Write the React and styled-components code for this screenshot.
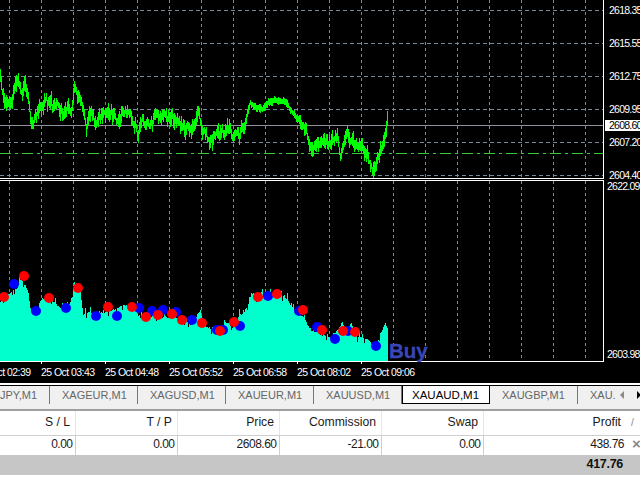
import React from 'react'
import styled, { createGlobalStyle } from 'styled-components'

const GlobalStyle = createGlobalStyle`
  html, body { margin: 0; padding: 0; background: #fff; }
  body { font-family: "Liberation Sans", Arial, sans-serif; }
`

const priceKeys = [[0,80],[2,92],[5,105],[8,108],[12,103],[15,88],[18,78],[20,84],[24,80],[27,95],[29,108],[31,130],[33,125],[37,118],[41,108],[44,100],[47,100],[50,108],[54,112],[58,105],[62,118],[66,108],[70,112],[72,105],[74,78],[76,92],[80,98],[83,110],[86,122],[92,118],[97,125],[103,118],[108,115],[115,120],[122,115],[128,113],[135,118],[137,130],[142,122],[148,118],[152,118],[158,116],[165,120],[172,115],[177,118],[180,122],[185,128],[190,130],[193,135],[197,125],[199,117],[202,135],[207,140],[213,140],[220,142],[228,135],[235,140],[239,135],[241,120],[245,115],[250,100],[254,105],[258,108],[262,112],[268,103],[274,100],[280,103],[285,102],[292,112],[297,120],[302,120],[306,135],[310,142],[318,140],[323,150],[330,142],[337,135],[340,148],[347,133],[352,140],[357,145],[365,155],[372,162],[375,170],[378,155],[382,143],[385,135],[387,123]]

const areaKeys = [[0,302],[10,293],[17,288],[20,280],[25,285],[28,293],[31,315],[37,307],[42,298],[47,299],[53,302],[63,310],[70,303],[74,283],[80,292],[83,315],[88,312],[100,313],[107,312],[117,308],[123,305],[137,310],[140,317],[157,317],[173,317],[183,320],[190,325],[200,310],[203,325],[213,330],[220,332],[225,322],[233,328],[242,310],[247,307],[252,290],[255,298],[263,295],[277,292],[287,300],[293,308],[303,317],[310,330],[323,335],[330,337],[337,330],[342,322],[345,332],[351,323],[357,338],[363,338],[370,342],[375,350],[380,333],[385,323],[387,328]]

const blueDots = [[14,284],[36,311],[66,308],[96,316],[117,316],[139,308],[152,311],[163,310],[176,312],[192,320],[217,330],[223,330],[240,326],[268,296],[299,311],[317,327],[335,339],[348,331],[376,346]]
const redDots = [[4,297],[24,276],[49,298],[78,288],[108,307],[132,307],[146,317],[158,315],[172,314],[182,320],[202,323],[220,331],[234,322],[258,297],[277,294],[303,310],[322,330],[343,331],[355,332]]

const gridX = Array.from({ length: 19 }, (_, i) => 9 + i * 32)
const gridY = [10, 43, 76, 109, 142, 175]

// small seeded generator, the noise has to come out the same on every render
function makeRandom(seed) {
  let s = seed
  return () => {
    s = (s * 16807) % 2147483647
    return (s - 1) / 2147483646
  }
}

function valueAt(keys, x) {
  for (let i = 1; i < keys.length; i++) {
    if (x <= keys[i][0]) {
      const [x0, y0] = keys[i - 1]
      const [x1, y1] = keys[i]
      return y0 + ((y1 - y0) * (x - x0)) / (x1 - x0)
    }
  }
  return keys[keys.length - 1][1]
}

function pricePath() {
  const rnd = makeRandom(4711)
  let d = ''
  let drift = 0
  for (let x = 0; x <= 387; x++) {
    const calm = x > 245 && x < 300
    drift = drift * 0.8 + (rnd() - 0.5) * (calm ? 2 : 10)
    const y = valueAt(priceKeys, x) + drift
    const reach = calm ? 2.5 : 7
    const top = y - 2 - rnd() * reach
    const low = y + 2 + rnd() * reach
    d += `${d ? 'L' : 'M'}${x + 0.5} ${top.toFixed(0)}L${x + 0.5} ${low.toFixed(0)}`
  }
  return d
}

function areaPath() {
  const rnd = makeRandom(1234)
  let d = 'M0 361'
  for (let x = 0; x <= 387; x++) {
    const spike = rnd() > 0.85 ? 2 + rnd() * 5 : 0
    const dip = rnd() > 0.9 ? 4 : 0
    const y = valueAt(areaKeys, x) + 1 - rnd() * 2 - spike + dip
    d += `L${x} ${y.toFixed(0)}L${x + 1} ${y.toFixed(0)}`
  }
  return d + 'L388 361Z'
}

const tabs = ['JPY,M1', 'XAGEUR,M1', 'XAGUSD,M1', 'XAUEUR,M1', 'XAUUSD,M1', 'XAUAUD,M1', 'XAUGBP,M1', 'XAU.']
const times = ['25 Oct 02:39', '25 Oct 03:43', '25 Oct 04:48', '25 Oct 05:52', '25 Oct 06:58', '25 Oct 08:02', '25 Oct 09:06']

function VerticalGrid({ y1, y2 }) {
  return gridX.map((x) => (
    <line key={x} x1={x + 0.5} x2={x + 0.5} y1={y1} y2={y2} stroke="#778899" strokeDasharray="3 3" />
  ))
}

export default function App() {
  return (
    <Page>
      <GlobalStyle />
      <ChartStack>
        <TopPane>
          <Plot>
            <ChartSvg width="603" height="178" viewBox="0 0 603 178">
              <VerticalGrid y1={0} y2={178} />
              {gridY.map((y) => (
                <line key={y} x1="0" x2="603" y1={y + 0.5} y2={y + 0.5} stroke="#778899" strokeDasharray="4 3" />
              ))}
              <line x1="0" x2="603" y1="153.5" y2="153.5" stroke="#32cd32" strokeDasharray="11 4 3 4" />
              <line x1="0" x2="603" y1="125.5" y2="125.5" stroke="#8c919b" />
              <path d={pricePath()} fill="none" stroke="#00ff00" strokeWidth="1.2" strokeLinejoin="bevel" shapeRendering="crispEdges" />
            </ChartSvg>
          </Plot>
          <PriceAxis>
            <PriceScale>
              <PriceLabel>2618.35</PriceLabel>
              <PriceLabel>2615.55</PriceLabel>
              <PriceLabel>2612.75</PriceLabel>
              <PriceLabel>2609.95</PriceLabel>
              <PriceLabel>2607.20</PriceLabel>
              <PriceLabel>2604.40</PriceLabel>
            </PriceScale>
            <PriceTag>2608.60</PriceTag>
          </PriceAxis>
        </TopPane>
        <BottomPane>
          <Plot>
            <ChartSvg width="603" height="180" viewBox="0 181 603 180">
              <VerticalGrid y1={181} y2={361} />
              <path d={areaPath()} fill="#00ffcc" />
              {blueDots.map(([x, y]) => (
                <circle key={x} cx={x} cy={y} r="5" fill="#0000ff" />
              ))}
              {redDots.map(([x, y]) => (
                <circle key={x} cx={x} cy={y} r="5" fill="#ff0000" />
              ))}
            </ChartSvg>
            <SignalLabel>Buy</SignalLabel>
          </Plot>
          <IndicatorScale>
            <span>2622.09</span>
            <span>2603.98</span>
          </IndicatorScale>
        </BottomPane>
        <TimeAxis>
          {times.map((t) => (
            <TimeLabel key={t}>{t}</TimeLabel>
          ))}
        </TimeAxis>
      </ChartStack>
      <TabBar>
        <TabRow>
          {tabs.map((t) => (
            <Tab key={t} $active={t === 'XAUAUD,M1'} $first={t === 'JPY,M1'}>
              {t}
            </Tab>
          ))}
        </TabRow>
        <TabArrows>
          <svg width="22" height="10" viewBox="0 0 22 10">
            <path d="M2 5l4-4v8z" fill="#8a8a8a" />
            <path d="M19 1l4 4-4 4z" fill="#000" />
          </svg>
        </TabArrows>
      </TabBar>
      <Table>
        <HeaderRow>
          <HeaderCell>S / L</HeaderCell>
          <HeaderCell>T / P</HeaderCell>
          <HeaderCell>Price</HeaderCell>
          <HeaderCell>Commission</HeaderCell>
          <HeaderCell>Swap</HeaderCell>
          <ProfitHeader>Profit</ProfitHeader>
          <RowMark>/</RowMark>
        </HeaderRow>
        <DataRow>
          <DataCell>0.00</DataCell>
          <DataCell>0.00</DataCell>
          <DataCell>2608.60</DataCell>
          <DataCell>-21.00</DataCell>
          <DataCell>0.00</DataCell>
          <ProfitCell>438.76</ProfitCell>
          <CloseMark>×</CloseMark>
        </DataRow>
        <TotalRow>417.76</TotalRow>
      </Table>
    </Page>
  )
}

const Page = styled.div`
  width: 640px;
  height: 480px;
  display: flex;
  flex-direction: column;
  overflow: hidden;
  background: #fff;
`

const ChartStack = styled.div`
  height: 383px;
  flex: none;
  display: flex;
  flex-direction: column;
  background: #000;
  color: #fff;
  overflow: hidden;
  font-size: 10.5px;
  letter-spacing: -0.75px;
`

const TopPane = styled.div`
  height: 179px;
  flex: none;
  display: flex;
  margin-bottom: 1px;
`

const BottomPane = styled.div`
  height: 181px;
  flex: none;
  display: flex;
`

const Plot = styled.div`
  position: relative;
  width: 603px;
  flex: none;
  border-right: 1px solid #fff;
  border-bottom: 1px solid #fff;

  ${BottomPane} & {
    border-top: 1px solid #fff;
    height: 180px;
  }
`

const ChartSvg = styled.svg`
  display: block;
`

const SignalLabel = styled.div`
  position: absolute;
  left: 389px;
  bottom: -2px;
  color: #3a46b8;
  font-size: 20.5px;
  font-weight: 700;
  letter-spacing: 0;
  line-height: 24px;
  -webkit-text-stroke: 0.3px #3a46b8;
`

const PriceAxis = styled.div`
  position: relative;
  flex: 1;
  min-width: 0;
`

const PriceScale = styled.div`
  display: flex;
  flex-direction: column;
  margin-top: -6px;
`

const PriceLabel = styled.div`
  height: 33px;
  line-height: 33px;
  padding-left: 5px;
  white-space: nowrap;
`

const PriceTag = styled.div`
  position: absolute;
  top: 120px;
  left: 1px;
  right: 0;
  height: 11px;
  line-height: 11px;
  padding-left: 4px;
  background: #fff;
  color: #000;
  white-space: nowrap;
`

const IndicatorScale = styled.div`
  flex: 1;
  min-width: 0;
  height: 180px;
  padding-left: 3px;
  display: flex;
  flex-direction: column;
  justify-content: space-between;
  white-space: nowrap;
  line-height: 12px;
`

const TimeAxis = styled.div`
  display: flex;
  margin-left: -23px;
  width: 663px;
`

const TimeLabel = styled.div`
  width: 64px;
  flex: none;
  padding-top: 5px;
  line-height: 12px;
  white-space: nowrap;
  letter-spacing: -0.55px;
  background: linear-gradient(#fff, #fff) left top / 1px 3px no-repeat;
`

const TabBar = styled.div`
  position: relative;
  height: 23px;
  flex: none;
  margin-top: 2px;
  border-top: 1px solid #000;
  background: #f0f0f0;
  overflow: hidden;
`

const TabRow = styled.div`
  display: flex;
  margin-left: -38px;
`

const Tab = styled.div`
  width: 88px;
  flex: none;
  box-sizing: border-box;
  height: 18px;
  line-height: 18px;
  padding-left: ${(p) => (p.$first ? '0' : p.$active ? '9px' : '12px')};
  text-align: ${(p) => (p.$first ? 'right' : 'left')};
  padding-right: ${(p) => (p.$first ? '12px' : '0')};
  font-size: ${(p) => (p.$active ? '11.5px' : '11px')};
  white-space: nowrap;
  color: ${(p) => (p.$active ? '#000' : '#666')};
  background: ${(p) => (p.$active ? '#fff' : 'transparent')};
  border-right: 1px solid ${(p) => (p.$active ? '#000' : '#777')};
  border-left: ${(p) => (p.$active ? '1px solid #000' : 'none')};
  border-bottom: ${(p) => (p.$active ? '1px solid #000' : 'none')};
`

const TabArrows = styled.div`
  position: absolute;
  top: 4px;
  right: 0;
  height: 10px;
  width: 22px;
  background: #f0f0f0;
  svg {
    display: block;
  }
`

const Table = styled.div`
  flex: none;
  border-top: 2px solid #a0a0a0;
  color: #1a1a1a;
`

const HeaderRow = styled.div`
  display: grid;
  grid-template-columns: 76px 102px 102px 102px 102px 140px 16px;
  height: 24px;
  border-bottom: 1px solid #cfcfcf;
  font-size: 12.2px;
  line-height: 23px;
`

const HeaderCell = styled.div`
  text-align: right;
  padding-right: 5px;
  border-right: 1px solid #e6e6e6;
  box-sizing: border-box;
`

const ProfitHeader = styled.div`
  text-align: right;
  padding-right: 3px;
`

const RowMark = styled.div`
  color: #8a8a8a;
  font-size: 10px;
  padding-left: 7px;
`

const DataRow = styled.div`
  display: grid;
  grid-template-columns: 75.5px 102px 102px 102px 102px 141.5px 15px;
  height: 19px;
  font-size: 12px;
  letter-spacing: -0.5px;
  line-height: 16px;
`

const DataCell = styled.div`
  text-align: right;
  padding-right: 2px;
  border-right: 1px solid #cfcfcf;
  box-sizing: border-box;
`

const ProfitCell = styled.div`
  text-align: right;
  padding-right: 1px;
`

const CloseMark = styled.div`
  color: #8a8a8a;
  font-size: 15px;
  font-weight: 700;
  line-height: 16px;
  padding-left: 7px;
`

const TotalRow = styled.div`
  height: 20px;
  line-height: 19px;
  padding-right: 17px;
  text-align: right;
  background: #c6c6c6;
  color: #111;
  font-size: 12.5px;
  letter-spacing: -0.3px;
  font-weight: 700;
`
